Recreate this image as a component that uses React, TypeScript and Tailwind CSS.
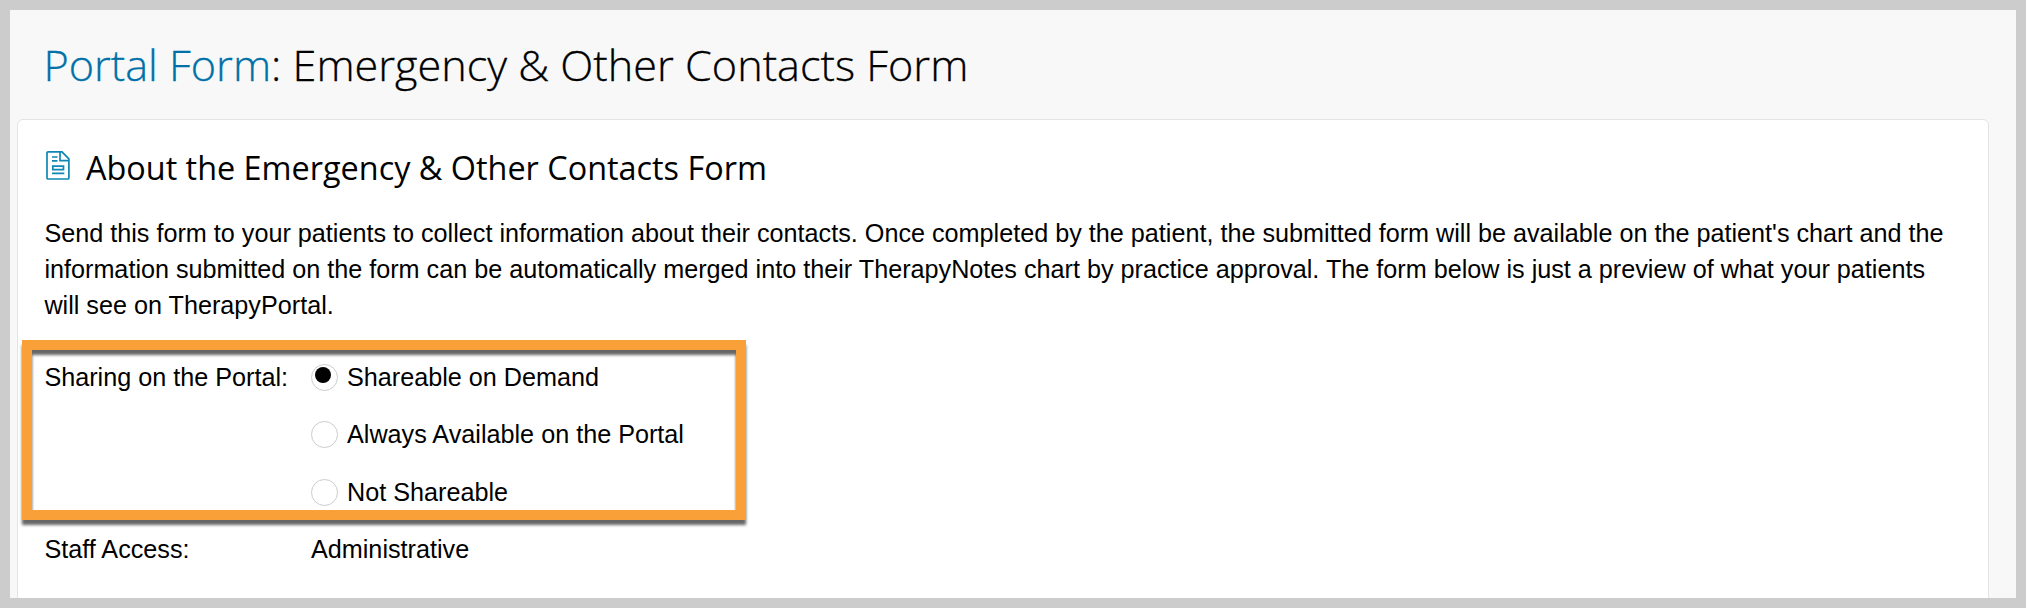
import clsx from "clsx";
import { useState } from "react";

const sharingOptions = [
  { value: "demand", label: "Shareable on Demand", height: "h-[57px]" },
  { value: "always", label: "Always Available on the Portal", height: "h-[58px]" },
  { value: "none", label: "Not Shareable", height: "h-[57px]" },
];

function FormIcon() {
  return (
    <svg width="24" height="30" viewBox="0 0 24 30" fill="none" stroke="#0f87b3" strokeWidth="1.7" className="shrink-0">
      <path d="M2 1.9h14l6.9 7v19.1a1 1 0 0 1-1 1H2a1 1 0 0 1-1-1V2.9a1 1 0 0 1 1-1z" />
      <path d="M14 1.9v8.8h9M6 7h5.5M6 10.9h5.5M6 23.4h12.3" />
      <path d="M6.8 16.2h10.7v3.4H6.8z" />
    </svg>
  );
}

function SharingRadio({ label, checked, onSelect }: { label: string; checked: boolean; onSelect: () => void }) {
  return (
    <button type="button" role="radio" aria-checked={checked} onClick={onSelect} className="flex items-start">
      <span className="mt-[5px] mr-[9px] block h-[27px] w-[27px] rounded-full border border-[#ccc] bg-white pt-[2px] pl-[3px]">
        {checked && <span className="block h-4 w-4 rounded-full bg-black" />}
      </span>
      <span>{label}</span>
    </button>
  );
}

export default function App() {
  const [sharing, setSharing] = useState("demand");

  return (
    <div className="h-[608px] w-[2026px] overflow-hidden border-[10px] border-[#ccc] bg-[#f8f8f8] font-['Liberation_Sans',Arial,sans-serif] text-[25.2px] leading-[36px] text-black">
      <h1 className="h-[109px] pt-[25px] pl-[33.4px] font-['Open_Sans',sans-serif] text-[43.2px] leading-[59px] font-light whitespace-nowrap [-webkit-text-stroke:0.3px]">
        <a className="text-[#0070a8]">Portal Form</a>: Emergency &amp; Other Contacts Form
      </h1>

      <main className="relative ml-[7px] h-[500px] w-[1972px] rounded-t-[6px] border border-[#e4e4e4] bg-white pl-[26.4px]">
        <h2 className="flex h-[95px] items-start pt-[25px] font-['Open_Sans',sans-serif] text-[32.4px] leading-[45px] whitespace-nowrap">
          <span className="mt-[5px] mr-4 ml-[1.6px]">
            <FormIcon />
          </span>
          About the Emergency &amp; Other Contacts Form
        </h2>

        <p className="h-[144px] whitespace-nowrap">
          Send this form to your patients to collect information about their contacts. Once completed by the patient, the submitted form will be available on the patient's chart and the
          <br />
          information submitted on the form can be automatically merged into their TherapyNotes chart by practice approval. The form below is just a preview of what your patients
          <br />
          will see on TherapyPortal.
        </p>

        <div className="grid grid-cols-[266.6px_1fr]">
          <div>Sharing on the Portal:</div>
          <div role="radiogroup">
            {sharingOptions.map((option) => (
              <div key={option.value} className={clsx("flex items-start", option.height)}>
                <SharingRadio label={option.label} checked={sharing === option.value} onSelect={() => setSharing(option.value)} />
              </div>
            ))}
          </div>
          <div>Staff Access:</div>
          <div>Administrative</div>
        </div>

        {/* callout frame around the sharing options */}
        <div className="pointer-events-none absolute top-[220px] left-[4px] h-[180px] w-[724px] border-[10px] border-[#f9a038] drop-shadow-[0_5px_1.5px_rgba(0,0,0,0.6)]" />
      </main>
    </div>
  );
}
